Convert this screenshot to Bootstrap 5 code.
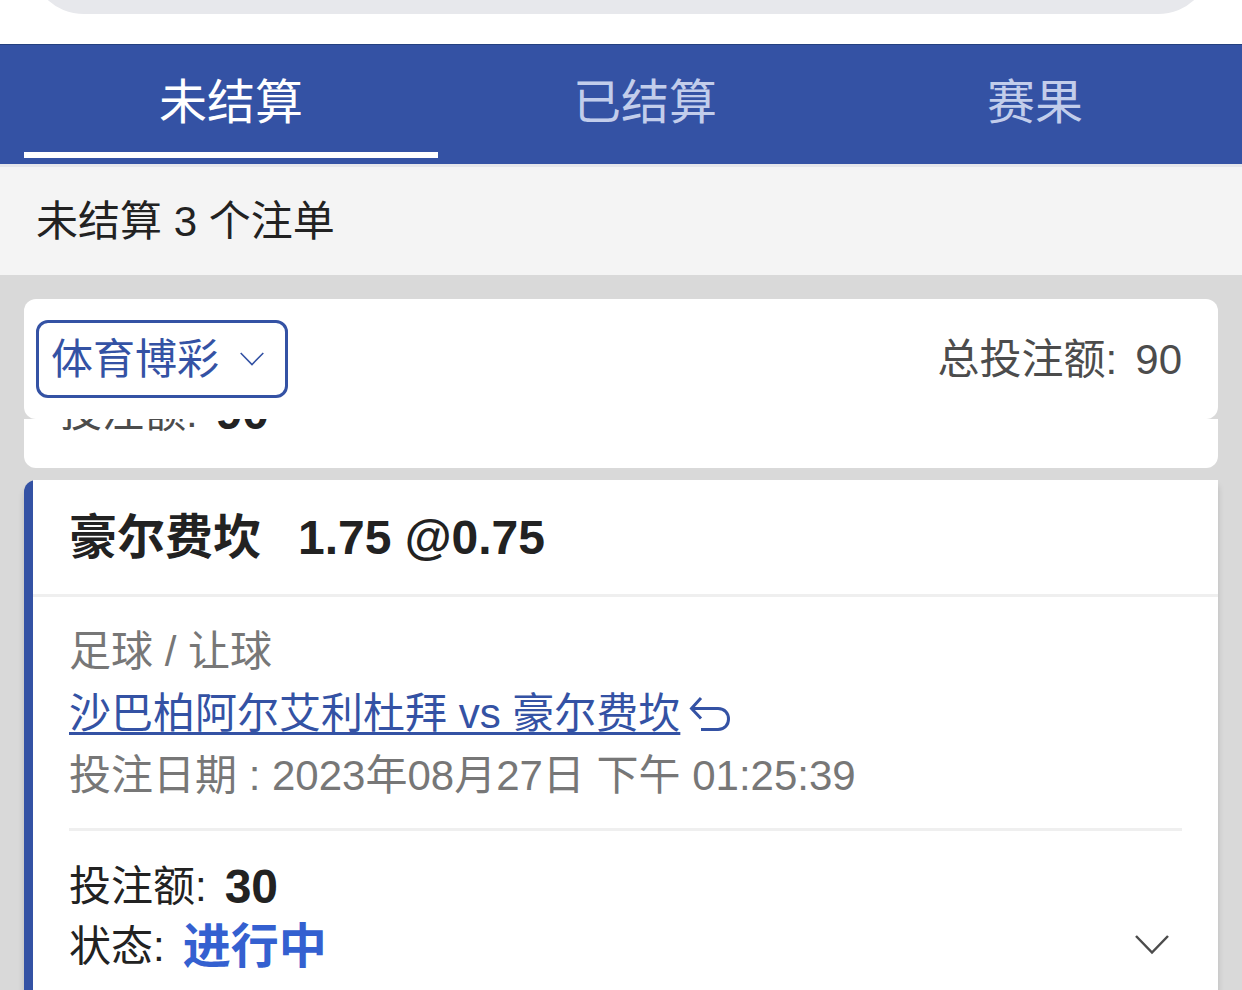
<!DOCTYPE html>
<html lang="zh-CN">
<head>
<meta charset="utf-8">
<meta name="viewport" content="width=device-width, initial-scale=1">
<title>未结算注单</title>
<link href="https://cdn.jsdelivr.net/npm/bootstrap@5.3.0/dist/css/bootstrap.min.css" rel="stylesheet">
<style>
  :root { --brand: #3452a4; --page: #d9d9d9; --rule: #efefef; }
  body { font-family: "Liberation Sans", "Noto Sans CJK SC", sans-serif; font-size: 42px; line-height: 60px; color: #222; background: var(--page); }
  .address-strip { height: 44px; }
  .address-pill { height: 108px; margin: -94px 30px 0; background: #e7e8ec; }
  .bet-tabs { height: 120px; padding: 0 24px 6px; background: var(--brand); border-top: 1px solid #24407f; font-size: 48px; }
  .bet-tabs .nav-link { color: #c2cdeb; padding: 8px 0 0; border-bottom: 6px solid transparent; border-radius: 0; line-height: 99px; }
  .bet-tabs .nav-link.active { color: #fff; border-color: #fff; }
  .count-bar { padding: 25px 36px 23px; background: #f4f4f4; border-top: 3px solid #e5e6ea; }
  .bets { padding: 24px 24px 0; }
  .panel { background: #fff; border-radius: 12px; }
  .filter-panel { padding: 21px 36px 21px 12px; color: #4c4c4c; }
  .filter-panel .pair { padding-top: 2px; }
  .sport-select { width: 252px; height: 78px; padding: 2px 60px 0 12px; border: 3px solid var(--brand); border-radius: 12px; color: var(--brand); font-size: 42px; line-height: 70px;
    background: #fff url("data:image/svg+xml,%3Csvg xmlns='http://www.w3.org/2000/svg' width='24' height='14' viewBox='0 0 24 14' fill='none' stroke='%233452a4' stroke-width='1.600'%3E%3Cpath d='M.7 1l11.3 11.500L23.300 1'/%3E%3C/svg%3E") no-repeat right 21px center / 24px 14px; }
  .scrolled-bet { border-radius: 0 0 12px 12px; padding: 0 36px 25px; color: #4c4c4c; }
  .scrolled-bet .pair { margin-top: -36px; }
  .pair { gap: 18px; }
  .pair dt { font-weight: 400; }
  .pair dd { font-size: 48px; font-weight: 700; color: #222; }
  .pair .running { color: #3460d0; }
  .bet-card { margin-top: 12px; background: #fff; border-left: 9px solid var(--brand); border-radius: 12px 0 0 0; box-shadow: 0 6px 6px rgba(0,0,0,.15); }
  .bet-title { padding: 28px 36px 26px; background: #fff; border-bottom: 3px solid var(--rule); font-size: 48px; line-height: 60px; font-weight: 700; gap: 37px; }
  .bet-body { padding: 24px 36px 12px; }
  .bet-facts { padding-bottom: 21px; border-bottom: 3px solid var(--rule); line-height: 62px; color: #777; }
  .match-link { color: var(--brand); text-decoration: underline; text-decoration-thickness: 3px; text-underline-offset: 4px; text-decoration-skip-ink: none; }
  .plain-btn { color: var(--brand); background: none; border: 0; line-height: 0; }
  .bet-status { padding-top: 26px; }
  .expand-btn { color: #4c4c4c; padding: 0 12px 21px; }
</style>
</head>
<body>
<div class="d-flex flex-column min-vh-100">
  <div class="address-strip bg-white overflow-hidden"><div class="address-pill rounded-pill"></div></div>

  <nav class="bet-tabs nav nav-fill flex-nowrap" aria-label="注单">
    <a class="nav-link active" href="#open" aria-current="page">未结算</a>
    <a class="nav-link" href="#settled">已结算</a>
    <a class="nav-link" href="#results">赛果</a>
  </nav>

  <div class="count-bar">未结算 3 个注单</div>

  <main class="bets d-flex flex-column flex-grow-1">
    <section class="panel filter-panel d-flex align-items-center justify-content-between">
      <select class="form-select sport-select" aria-label="博彩类型"><option>体育博彩</option></select>
      <div class="pair d-flex"><span>总投注额:</span><span>90</span></div>
    </section>

    <section class="scrolled-bet bg-white">
      <div class="overflow-hidden">
        <dl class="pair d-flex align-items-center mb-0"><dt>投注额:</dt><dd class="mb-0">90</dd></dl>
      </div>
    </section>

    <article class="bet-card flex-grow-1">
      <h2 class="bet-title d-flex mb-0"><span>豪尔费坎</span><span>1.75 @0.75</span></h2>
      <div class="bet-body">
        <div class="bet-facts">
          <div>足球 / 让球</div>
          <div class="d-flex align-items-center">
            <a class="match-link" href="#match">沙巴柏阿尔艾利杜拜 vs 豪尔费坎</a>
            <button class="plain-btn p-0 ms-2" type="button" aria-label="返回赛事">
              <svg width="44" height="38" viewBox="0 0 44 38" fill="none" stroke="currentColor" stroke-width="3"><path d="M13 3L3.500 13.500L13 23.500M3.500 13.500H30C37 13.500 40.500 18.500 40.500 24S37 34.500 30 34.500H13"/></svg>
            </button>
          </div>
          <div>投注日期 : 2023年08月27日 下午 01:25:39</div>
        </div>
        <div class="bet-status d-flex justify-content-between align-items-end">
          <div>
            <dl class="pair d-flex align-items-center mb-0"><dt>投注额:</dt><dd class="mb-0">30</dd></dl>
            <dl class="pair d-flex align-items-center mb-0"><dt>状态:</dt><dd class="running mb-0">进行中</dd></dl>
          </div>
          <button class="plain-btn expand-btn" type="button" aria-label="展开详情">
            <svg width="36" height="22" viewBox="0 0 36 22" fill="none" stroke="currentColor" stroke-width="2.500"><path d="M2 2l16 16.500L34 2"/></svg>
          </button>
        </div>
      </div>
    </article>
  </main>
</div>
<script src="https://cdn.jsdelivr.net/npm/bootstrap@5.3.0/dist/js/bootstrap.bundle.min.js"></script>
</body>
</html>
